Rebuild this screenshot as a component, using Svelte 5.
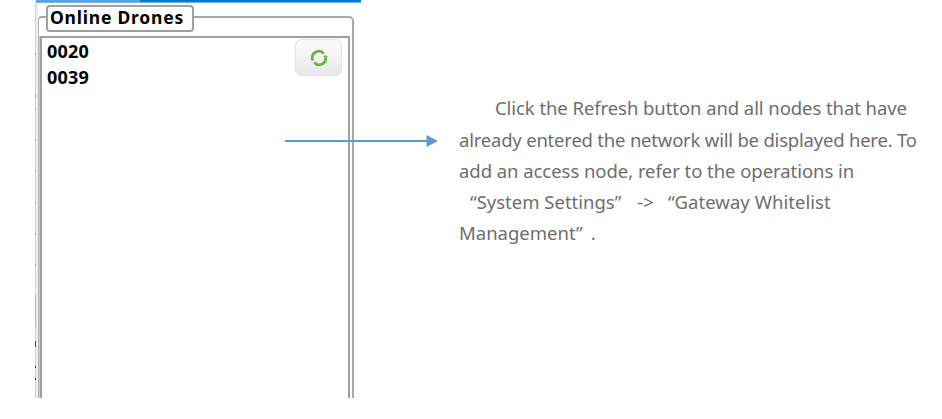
<script>
  const drones = ['0020', '0039'];
  const ticks = [15, 50, 92, 105, 136, 167, 199, 230, 261];
</script>

<main>
  <section class="shot">
    <div class="titlebar"><i></i></div>
    <div class="edge">
      {#each ticks as y}
        <i style="top:{y}px"></i>
      {/each}
      <b class="gold"></b>
      <b class="mark m1"></b>
      <b class="mark m2"></b>
      <b class="mark m3"></b>
    </div>
    <div class="group">
      <h2>Online Drones</h2>
      <div class="list">
        <ul>
          {#each drones as id}
            <li>{id}</li>
          {/each}
        </ul>
        <button aria-label="Refresh">
          <svg width="20" height="18" viewBox="0 0 20 18" fill="none" stroke="#6ab44c" stroke-width="2.700">
            <path d="M3.500 10.500A6.500 6.500 0 0 1 14.800 4.700" />
            <path d="M16.500 7.500A6.500 6.500 0 0 1 5.200 13.300" />
            <path d="M1 10H6L3.400 12ZM14 8H19L16.600 6Z" fill="#6ab44c" stroke="none" />
          </svg>
        </button>
      </div>
    </div>
  </section>

  <svg class="arrow" width="153" height="12" viewBox="0 0 153 12">
    <path d="M0 6H143" stroke="#5b9bd5" stroke-width="2" />
    <path d="M141.500 0L153 6L141.500 12Z" fill="#5b9bd5" />
  </svg>

  <p>
    <span class="l1">Click the Refresh button and all nodes that have</span>
    <span class="l2">already entered the network will be displayed here. To</span>
    <span class="l3">add an access node, refer to the operations in</span>
    <span class="l4"><span class="a">“System Settings”</span><span class="b">-&gt;</span><span class="c">“Gateway Whitelist</span></span>
    <span class="l5"><span>Management”</span><span class="dot">.</span></span>
  </p>
</main>

<style>
  :global(body) { background: #fff; }
  main {
    position: relative;
    display: flex;
    width: 942px;
    height: 419px;
    overflow: hidden;
    background: #fff;
    font-family: 'Noto Sans', 'Open Sans', sans-serif;
  }
  .shot {
    position: relative;
    box-sizing: border-box;
    width: 326px;
    height: 398px;
    margin-left: 35px;
    padding-left: 1px;
    overflow: hidden;
    flex: none;
  }
  .titlebar { height: 2px; background: #0078d7; border-bottom: 1px solid #70b4e8; }
  .titlebar i { display: block; width: 104px; height: 2px; background: #55a5e5; }
  .edge {
    position: absolute;
    left: 0;
    top: 3px;
    width: 2px;
    height: 395px;
    background: #f0f0f0;
    border-left: 1px solid #d2d2d2;
  }
  .edge i { position: absolute; left: -1px; width: 1px; height: 2px; background: #aaa; }
  .edge b { position: absolute; left: -1px; width: 1px; }
  .edge .gold { top: 292px; height: 32px; background: #dcb94e; }
  .mark { height: 2px; background: #333; }
  .m1 { top: 338px; height: 6px; background: #663a35; }
  .m2 { top: 363px; }
  .m3 { top: 375px; }
  .group {
    box-sizing: border-box;
    width: 317px;
    height: 400px;
    margin: 13px 0 0 1px;
    border: 2px solid #a9a9a9;
    border-left-color: #b4b4b4;
    border-radius: 5px 5px 0 0;
    padding: 18px 2px 0 1px;
    background: linear-gradient(#cbcbcb, #cbcbcb) 0 18px / 1px 100% no-repeat #fff;
  }
  h2 {
    position: absolute;
    left: 11px;
    top: 5px;
    box-sizing: border-box;
    width: 148px;
    height: 27px;
    margin: 0;
    padding-left: 2px;
    border: 2px solid #a0a0a0;
    border-radius: 4px;
    background: #fff;
    color: #000;
    font: 700 17.5px/20px 'Noto Sans', sans-serif;
    letter-spacing: 0.78px;
    white-space: nowrap;
  }
  .list {
    display: flex;
    justify-content: space-between;
    align-items: flex-start;
    box-sizing: border-box;
    height: 380px;
    border: 2px solid #9a9fa8;
    border-bottom: 0;
    background: #fff;
  }
  ul { margin: 1px 0 0 5px; padding: 0; list-style: none; }
  li { height: 25.500px; font: 700 18px/25px 'Noto Sans', sans-serif; letter-spacing: 0.2px; color: #000; }
  button {
    display: flex;
    align-items: center;
    justify-content: center;
    box-sizing: border-box;
    width: 47px;
    height: 37px;
    margin: 1px 6px 0 0;
    padding: 0;
    border: 1px solid #e4e4e4;
    border-radius: 7px;
    background: linear-gradient(#fbfbfb, #e9e9e9);
    box-shadow: 0 0 1px #ddd;
  }
  .arrow { position: absolute; left: 285px; top: 135px; }
  p {
    display: flex;
    flex-direction: column;
    margin: 92px 0 0 98px;
    color: #6e6e6e;
    font-size: 18.5px;
    line-height: 31.300px;
    white-space: nowrap;
  }
  p > span { display: flex; align-self: flex-start; }
  .l1 { margin-left: 36px; letter-spacing: -0.07px; }
  .l2 { padding-top: 1px; margin-bottom: -1px; letter-spacing: -0.21px; }
  .l3 { letter-spacing: -0.05px; }
  .l4 { margin-left: 11px; }
  .b { margin-left: 16px; }
  .c { margin-left: 14px; letter-spacing: 0.04px; }
  .dot { margin-left: 8px; }
</style>
